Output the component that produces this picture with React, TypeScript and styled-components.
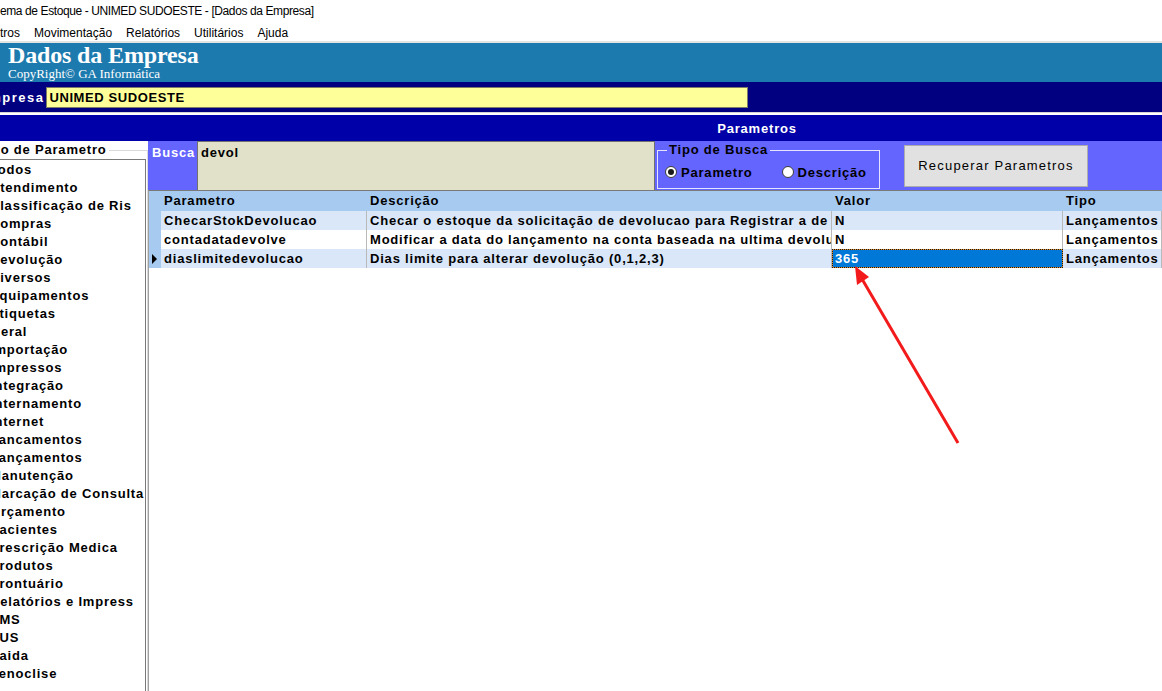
import React from 'react'
import styled, { createGlobalStyle, css } from 'styled-components'

const GlobalStyle = createGlobalStyle`
  * { box-sizing: border-box; }
  html, body { margin: 0; padding: 0; }
  body {
    width: 1162px;
    height: 691px;
    overflow: hidden;
    background: #ffffff;
    font-family: "Liberation Sans", Arial, sans-serif;
    color: #000;
  }
  #root { position: relative; height: 691px; overflow: hidden; }
`

const winFont = css`
  font-family: "Liberation Sans", Arial, sans-serif;
  font-size: 13px;
  font-weight: bold;
  letter-spacing: 0.8px;
`

const categorias = [
  'Todos', 'Atendimento', 'Classificação de Ris', 'Compras', 'Contábil', 'Devolução',
  'Diversos', 'Equipamentos', 'Etiquetas', 'Geral', 'Importação', 'Impressos', 'Integração',
  'Internamento', 'Internet', 'Lancamentos', 'Lançamentos', 'Manutenção', 'Marcação de Consulta',
  'Orçamento', 'Pacientes', 'Prescrição Medica', 'Produtos', 'Prontuário', 'Relatórios e Impress',
  'SMS', 'SUS', 'Saida', 'Venoclise',
]

const parametros = [
  {
    nome: 'ChecarStokDevolucao',
    descricao: 'Checar o estoque da solicitação de devolucao para Registrar a de',
    valor: 'N',
    tipo: 'Lançamentos',
  },
  {
    nome: 'contadatadevolve',
    descricao: 'Modificar a data do lançamento na conta baseada na ultima devolu',
    valor: 'N',
    tipo: 'Lançamentos',
  },
  {
    nome: 'diaslimitedevolucao',
    descricao: 'Dias limite para alterar devolução (0,1,2,3)',
    valor: '365',
    tipo: 'Lançamentos',
    atual: true,
  },
]

export default function App() {
  return (
    <Page>
      <GlobalStyle />
      <TitleBar>ema de Estoque - UNIMED SUDOESTE - [Dados da Empresa]</TitleBar>
      <MenuBar>
        <span>tros</span>
        <span>Movimentação</span>
        <span>Relatórios</span>
        <span>Utilitários</span>
        <span>Ajuda</span>
      </MenuBar>
      <Divider />
      <Banner>
        <BannerTitle>Dados da Empresa</BannerTitle>
        <BannerSub>CopyRight© GA Informática</BannerSub>
      </Banner>
      <CompanyBar>
        <CompanyLabel>Empresa</CompanyLabel>
        <CompanyInput>UNIMED SUDOESTE</CompanyInput>
      </CompanyBar>
      <Separator />
      <SectionTitle>Parametros</SectionTitle>
      <Body>
        <CategoryGroup>
          <CategoryLegend>Tipo de Parametro</CategoryLegend>
          <CategoryList>
            {categorias.map((c) => (
              <CategoryItem key={c}>{c}</CategoryItem>
            ))}
          </CategoryList>
        </CategoryGroup>
        <Main>
          <SearchBar>
            <SearchLabel>Busca</SearchLabel>
            <SearchBox>devol</SearchBox>
            <SearchType>
              <SearchTypeLegend>Tipo de Busca</SearchTypeLegend>
              <RadioRow>
                <RadioOption>
                  <RadioDot $checked />
                  Parametro
                </RadioOption>
                <RadioOption>
                  <RadioDot />
                  Descrição
                </RadioOption>
              </RadioRow>
            </SearchType>
            <FetchButton>Recuperar Parametros</FetchButton>
          </SearchBar>
          <Grid>
            <GridRow $header>
              <Indicator />
              <HeadCell>Parametro</HeadCell>
              <HeadCell>Descrição</HeadCell>
              <HeadCell>Valor</HeadCell>
              <HeadCell>Tipo</HeadCell>
            </GridRow>
            {parametros.map((p, i) => (
              <GridRow key={p.nome} $alt={i % 2 === 0}>
                <Indicator>{p.atual && <Pointer />}</Indicator>
                <Cell>{p.nome}</Cell>
                <Cell>{p.descricao}</Cell>
                <Cell $selected={p.atual}>{p.valor}</Cell>
                <Cell>{p.tipo}</Cell>
              </GridRow>
            ))}
          </Grid>
        </Main>
      </Body>
      <Annotation width="1162" height="691" viewBox="0 0 1162 691">
        <line x1="958" y1="443" x2="862" y2="279" stroke="#f21a1a" strokeWidth="3" />
        <polygon points="855,266 869,277 857,285" fill="#f21a1a" />
      </Annotation>
    </Page>
  )
}

const Page = styled.div`
  display: flex;
  flex-direction: column;
  height: 691px;
  overflow: hidden;
`

const TitleBar = styled.div`
  height: 22px;
  line-height: 22px;
  font-size: 12px;
  letter-spacing: -0.4px;
  white-space: nowrap;
  background: #fff;
`

const MenuBar = styled.div`
  height: 19px;
  display: flex;
  align-items: center;
  gap: 14px;
  font-size: 12px;
  padding-top: 2px;
  background: #fff;
`

const Divider = styled.div`
  height: 2px;
  background: #e4e4e4;
`

const Banner = styled.div`
  height: 39px;
  background: #1d7aae;
  color: #fff;
  padding: 1px 0 0 8px;
  font-family: "Liberation Serif", "Times New Roman", serif;
`

const BannerTitle = styled.div`
  font-size: 24px;
  font-weight: bold;
  line-height: 23px;
  letter-spacing: -0.15px;
`

const BannerSub = styled.div`
  font-size: 13px;
  line-height: 13px;
`

const CompanyBar = styled.div`
  height: 30px;
  background: #000080;
  display: flex;
  align-items: center;
  overflow: hidden;
`

const CompanyLabel = styled.span`
  ${winFont};
  letter-spacing: 1.5px;
  color: #fff;
  margin-left: -21px;
  margin-right: 2px;
  white-space: nowrap;
`

const CompanyInput = styled.div`
  ${winFont};
  letter-spacing: 0.6px;
  width: 702px;
  height: 21px;
  line-height: 19px;
  padding-left: 2px;
  background: #ffff99;
  border: 1px solid #7c7c68;
`

const Separator = styled.div`
  height: 3px;
  background: #fff;
  border-top: 1px solid #d6d6d6;
`

const SectionTitle = styled.div`
  ${winFont};
  height: 26px;
  background: #0000a8;
  color: #fff;
  display: flex;
  align-items: center;
  justify-content: center;
  padding-left: 352px;
`

const Body = styled.div`
  flex: 1;
  display: flex;
  min-height: 0;
`

const CategoryGroup = styled.fieldset`
  ${winFont};
  margin: 2px 0 0 -40px;
  padding: 0 1px 0 0;
  width: 188px;
  flex: none;
  border: 1px solid #d9d9d9;
  border-bottom: none;
  min-width: 0;
`

const CategoryLegend = styled.legend`
  margin-left: 17px;
  padding: 0 2px 0 1px;
  line-height: 14px;
`

const CategoryList = styled.div`
  margin-top: 2px;
  height: 540px;
  background: #fff;
  border: 1px solid #7a7a7a;
  border-bottom: none;
  padding: 1px 0 0 28px;
  overflow: hidden;
`

const CategoryItem = styled.div`
  height: 18px;
  line-height: 18px;
  white-space: nowrap;
  overflow: hidden;
`

const Main = styled.div`
  flex: 1;
  display: flex;
  flex-direction: column;
  min-width: 0;
`

const SearchBar = styled.div`
  height: 49px;
  background: #6464ff;
  display: flex;
  align-items: stretch;
`

const SearchLabel = styled.div`
  ${winFont};
  width: 49px;
  color: #fff;
  padding: 4px 0 0 4px;
  line-height: 15px;
`

const SearchBox = styled.div`
  ${winFont};
  width: 458px;
  background: #e1e1c9;
  border: 1px solid #707070;
  border-bottom: none;
  padding: 3px 3px;
  line-height: 15px;
`

const SearchType = styled.fieldset`
  ${winFont};
  margin: 2px 0 1px 2px;
  padding: 0 0 0 7px;
  width: 223px;
  border: 1px solid #e4e4ff;
  display: flex;
  flex-direction: column;
  min-width: 0;
`

const SearchTypeLegend = styled.legend`
  margin-left: 2px;
  padding: 0 2px;
  line-height: 14px;
`

const RadioRow = styled.div`
  flex: 1;
  display: flex;
  align-items: center;
  gap: 29px;
  padding-bottom: 1px;
`

const RadioOption = styled.label`
  display: flex;
  align-items: center;
  gap: 4px;
  white-space: nowrap;
`

const RadioDot = styled.span<{ $checked?: boolean }>`
  width: 12px;
  height: 12px;
  border-radius: 50%;
  background: #fff;
  border: 1px solid #3c3c3c;
  display: flex;
  align-items: center;
  justify-content: center;
  &::after {
    content: '';
    width: 6px;
    height: 6px;
    border-radius: 50%;
    background: ${(p) => (p.$checked ? '#1a1a1a' : 'transparent')};
  }
`

const FetchButton = styled.button`
  font-family: "Liberation Sans", Arial, sans-serif;
  font-size: 13px;
  letter-spacing: 1.2px;
  color: #000;
  margin: 0 0 0 24px;
  align-self: center;
  width: 184px;
  height: 42px;
  background: #e1e1e1;
  border: 1px solid #adadad;
  padding: 0;
`

const Grid = styled.div`
  flex: 1;
  background: #fff;
  border-top: 1px solid #7a7a7a;
  border-left: 1px solid #a0a0a0;
`

const GridRow = styled.div<{ $header?: boolean; $alt?: boolean }>`
  ${winFont};
  display: grid;
  grid-template-columns: 12px 206px 465px 231px 1fr;
  height: ${(p) => (p.$header ? '20px' : '19px')};
  line-height: ${(p) => (p.$header ? '20px' : '19px')};
  background: ${(p) => (p.$header ? '#a6caf0' : p.$alt ? '#d9e7f8' : '#ffffff')};
`

const Indicator = styled.div`
  background: #a6caf0;
  display: flex;
  align-items: center;
  padding-left: 3px;
`

const Pointer = styled.span`
  width: 0;
  height: 0;
  border-left: 5px solid #000;
  border-top: 5px solid transparent;
  border-bottom: 5px solid transparent;
`

const HeadCell = styled.div`
  padding-left: 3px;
  white-space: nowrap;
  overflow: hidden;
`

const Cell = styled.div<{ $selected?: boolean }>`
  padding-left: 3px;
  white-space: nowrap;
  overflow: hidden;
  border-right: 1px solid #b9b9b9;
  ${(p) =>
    p.$selected &&
    css`
      color: #fff;
      padding-left: 2px;
      border: 1px dotted #1a1a1a;
      line-height: 17px;
      background: linear-gradient(#0078d7, #0078d7) padding-box, #e08a2a border-box;
    `}
`

const Annotation = styled.svg`
  position: absolute;
  left: 0;
  top: 0;
  pointer-events: none;
`
